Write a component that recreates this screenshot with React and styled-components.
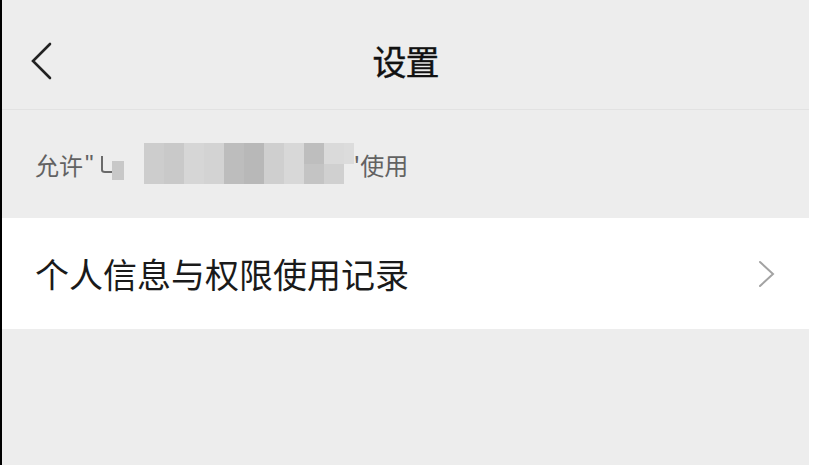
import React from "react";
import styled, { createGlobalStyle } from "styled-components";

const GlobalStyle = createGlobalStyle`
  html, body {
    margin: 0;
    padding: 0;
    background: #ffffff;
  }
  body {
    font-family: "Noto Sans CJK SC", "Noto Sans", sans-serif;
  }
`;

const blocks = [
  ["#cdcdcd", "#cdcdcd"],
  ["#c9c9c9", "#c9c9c9"],
  ["#d6d6d6", "#d6d6d6"],
  ["#d3d3d3", "#d3d3d3"],
  ["#bdbdbd", "#bdbdbd"],
  ["#b8b8b8", "#b8b8b8"],
  ["#cfcfcf", "#cfcfcf"],
  ["#d8d8d8", "#d8d8d8"],
  ["#bebebe", "#c4c4c4"],
  ["#dadada", "#d0d0d0"],
];

function App() {
  return (
    <Page>
      <GlobalStyle />
      <Phone>
        <Header>
          <BackButton>
            <svg width="22" height="38" viewBox="0 0 22 38">
              <polyline
                points="19,2 2,19 19,36"
                fill="none"
                stroke="#222"
                strokeWidth="2.6"
                strokeLinecap="round"
                strokeLinejoin="miter"
              />
            </svg>
          </BackButton>
          <Title>设置</Title>
        </Header>
        <Notice>
          <span>允许</span>
          <Quote>"</Quote>
          <svg width="12" height="22" viewBox="0 0 12 22">
            <path
              d="M2 3 L2 17 Q2 19 5 19 L12 19"
              fill="none"
              stroke="#6a6a6a"
              strokeWidth="2"
            />
          </svg>
          <Pixel $color="#c8c8c8" $w={12} $h={19} $offset={12} />
          <Gap />
          <Mosaic>
            {blocks.map(([top, bottom], i) => (
              <Column key={i}>
                <Pixel $color={top} $w={20} $h={21} />
                <Pixel $color={bottom} $w={20} $h={20} />
              </Column>
            ))}
            <Column>
              <Pixel $color="#dcdcdc" $w={10} $h={21} />
            </Column>
          </Mosaic>
          <span>'使用</span>
        </Notice>
        <Item>
          <ItemLabel>个人信息与权限使用记录</ItemLabel>
          <svg width="17" height="28" viewBox="0 0 17 28">
            <polyline
              points="2,2 15,14 2,26"
              fill="none"
              stroke="#a3a3a3"
              strokeWidth="2"
              strokeLinecap="round"
            />
          </svg>
        </Item>
        <Rest />
      </Phone>
    </Page>
  );
}

export default App;

const Page = styled.div`
  width: 815px;
  height: 465px;
  display: flex;
  background: #ffffff;
  overflow: hidden;
`;

const Phone = styled.div`
  width: 807px;
  height: 465px;
  border-left: 2px solid #000;
  background: #ededed;
  display: flex;
  flex-direction: column;
`;

const Header = styled.div`
  height: 110px;
  flex-shrink: 0;
  padding-top: 12px;
  box-sizing: border-box;
  border-bottom: 1px solid #e2e2e2;
  display: flex;
  align-items: center;
  justify-content: center;
  position: relative;
`;

const BackButton = styled.div`
  position: absolute;
  left: 29px;
  top: 42px;
  display: flex;
`;

const Title = styled.div`
  font-size: 34px;
  font-weight: 400;
  color: #111;
  letter-spacing: -1px;
  -webkit-text-stroke: 0.4px #111;
`;

const Notice = styled.div`
  height: 108px;
  flex-shrink: 0;
  padding-left: 33px;
  display: flex;
  align-items: center;
  font-size: 24px;
  color: #626262;
`;

const Quote = styled.span`
  font-family: "Liberation Sans", sans-serif;
  margin: 0 6px 0 2px;
`;

const Gap = styled.div`
  width: 20px;
`;

const Mosaic = styled.div`
  display: flex;
  align-self: flex-start;
  margin-top: 33px;
`;

const Column = styled.div`
  display: flex;
  flex-direction: column;
`;

const Pixel = styled.div`
  width: ${(p) => p.$w}px;
  height: ${(p) => p.$h}px;
  background: ${(p) => p.$color};
  margin-top: ${(p) => p.$offset || 0}px;
`;

const Item = styled.div`
  height: 111px;
  flex-shrink: 0;
  background: #ffffff;
  padding: 0 34px 0 33px;
  display: flex;
  align-items: center;
  justify-content: space-between;
`;

const ItemLabel = styled.div`
  font-size: 34px;
  color: #1a1a1a;
`;

const Rest = styled.div`
  flex: 1;
  background: #ededed;
`;
